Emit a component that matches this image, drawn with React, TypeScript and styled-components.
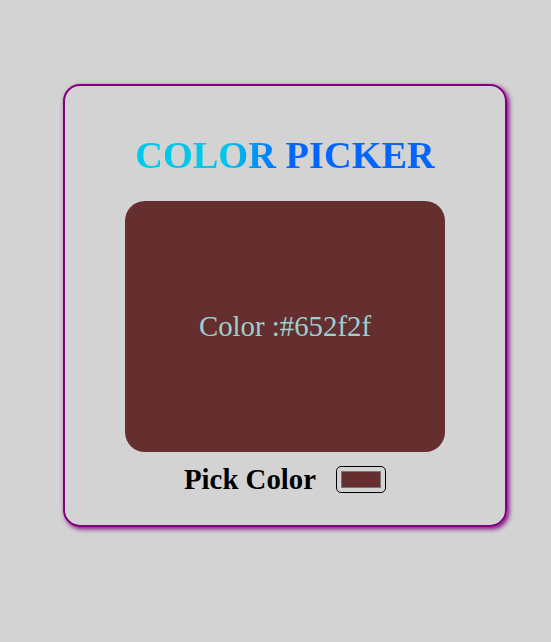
import React, { useState } from "react";
import styled, { createGlobalStyle } from "styled-components";

const Global = createGlobalStyle`
  html, body { margin: 0; padding: 0; background: #d3d3d3; }
  body { font-family: "Liberation Serif", "Times New Roman", serif; }
`;

const Page = styled.div`
  padding: 84px 0 0 63px;
  min-height: 642px;
  box-sizing: border-box;
`;

const Card = styled.div`
  width: 444px;
  height: 443px;
  box-sizing: border-box;
  border: 2px solid #800080;
  border-radius: 17px;
  box-shadow: 2px 2px 5px #800080;
  display: flex;
  flex-direction: column;
  align-items: center;
  padding-top: 47px;
`;

const Title = styled.h1`
  margin: 0;
  font-size: 38.4px;
  line-height: 44px;
  font-weight: bold;
  background: linear-gradient(90deg, #00c8e8 30%, #0066ff 50%);
  -webkit-background-clip: text;
  background-clip: text;
  color: transparent;
`;

const Swatch = styled.div<{ $c: string }>`
  margin-top: 24px;
  width: 320px;
  height: 251px;
  border-radius: 20px;
  background: ${(p) => p.$c};
  display: flex;
  align-items: center;
  justify-content: center;
  color: #9cd0d0;
  font-size: 28.8px;
`;

const PickRow = styled.div`
  margin-top: 11px;
  display: flex;
  align-items: center;
  gap: 20px;
`;

const PickLabel = styled.label`
  font-size: 28.8px;
  font-weight: bold;
  color: #000;
  line-height: 33px;
`;

const ColorInput = styled.input`
  width: 50px;
  height: 27px;
  margin: 0;
  padding: 4px 4px;
  box-sizing: border-box;
  border: 1px solid #000;
  border-radius: 5px;
  background: transparent;
  &::-webkit-color-swatch-wrapper {
    padding: 0;
  }
  &::-webkit-color-swatch {
    border: 1.5px solid #777;
    border-radius: 0;
  }
`;

export default function App() {
  const [color, setColor] = useState("#652f2f");
  return (
    <>
      <Global />
      <Page>
        <Card>
          <Title>COLOR PICKER</Title>
          <Swatch $c={color}>Color :{color}</Swatch>
          <PickRow>
            <PickLabel htmlFor="pick">Pick Color</PickLabel>
            <ColorInput
              id="pick"
              type="color"
              value={color}
              onChange={(e) => setColor(e.target.value)}
            />
          </PickRow>
        </Card>
      </Page>
    </>
  );
}
